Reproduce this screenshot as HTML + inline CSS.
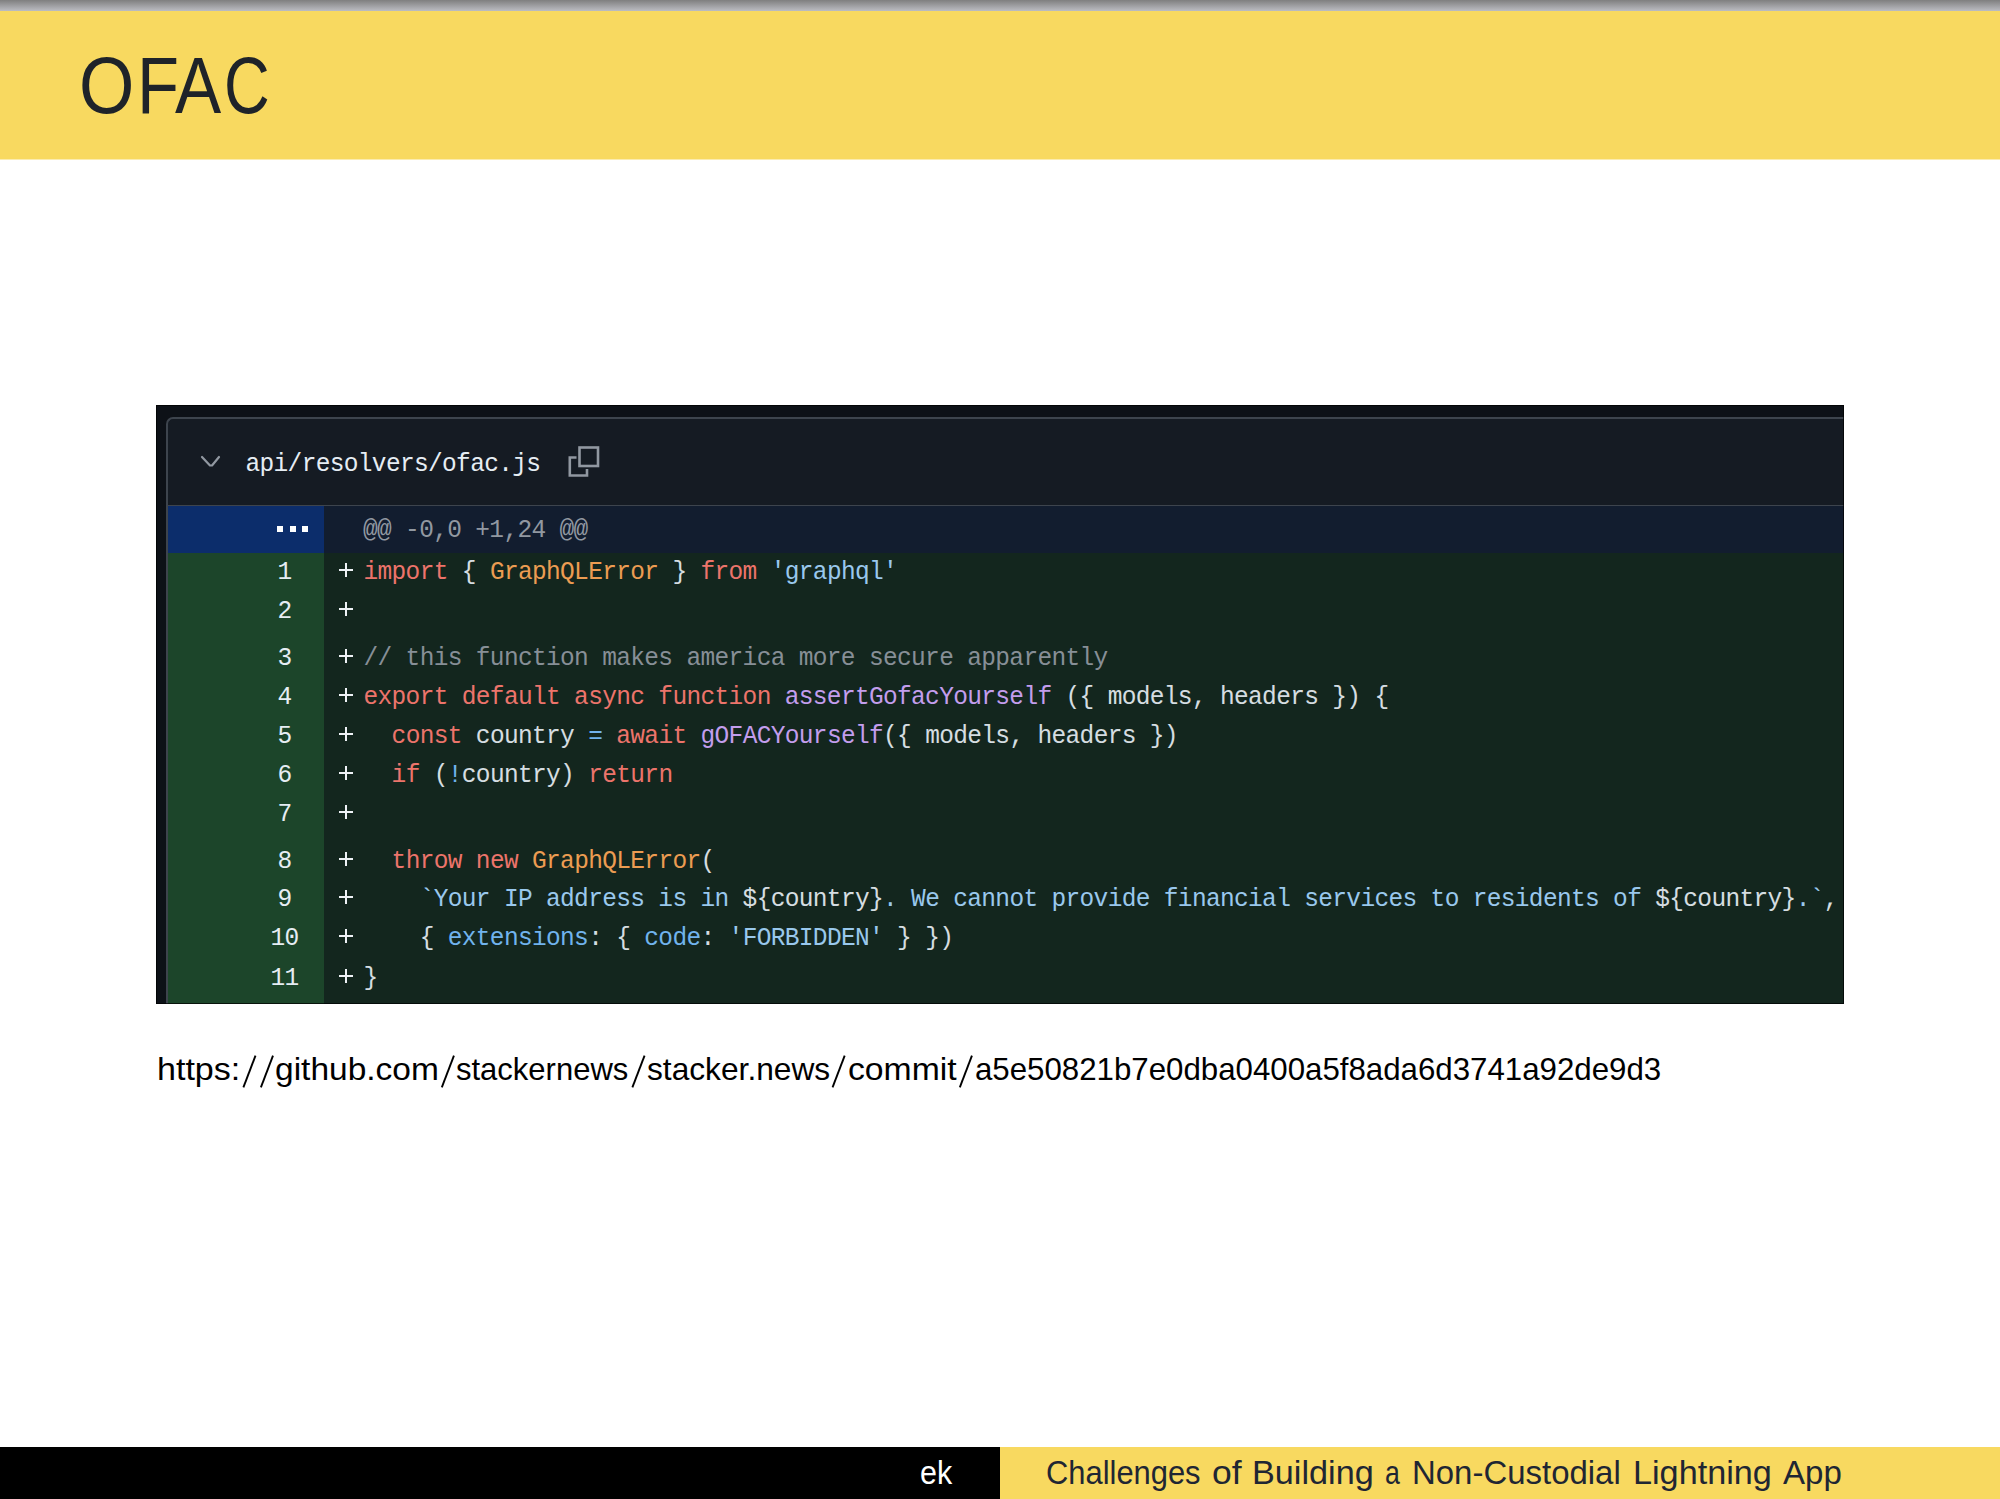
<!DOCTYPE html>
<html><head><meta charset="utf-8">
<style>
html,body{margin:0;padding:0;}
body{width:2000px;height:1499px;position:relative;overflow:hidden;background:#fff;font-family:"Liberation Sans",sans-serif;}
.abs{position:absolute;}
#topgrad{left:0;top:0;width:2000px;height:11px;background:linear-gradient(#7f7f7f,#bbbcc2);}
#hdr{left:0;top:11px;width:2000px;height:148px;background:#f8d960;box-shadow:0 1px 0 #fbecb0;}
.tl{top:45.5px;font-size:79.5px;line-height:1;color:#1f2329;transform-origin:0 0;white-space:nowrap;}
.us{top:1053.2px;font-size:32px;line-height:1;color:#000;transform-origin:0 0;white-space:nowrap;}
#fl{left:0;top:1447px;width:1000px;height:52px;background:#000;}
#fr{left:1000px;top:1447px;width:1000px;height:52px;background:#f8d960;}
.fs{top:1456px;font-size:33.4px;line-height:1;white-space:nowrap;transform-origin:0 0;}

#box{left:156px;top:405px;width:1688px;height:599px;background:#0d1117;overflow:hidden;}
#card{left:10px;top:12px;width:1700px;height:700px;background:#151b23;border-left:2px solid #3d444d;border-top:2px solid #3d444d;border-top-left-radius:7px;}
#hsep{left:168px;top:505px;width:1676px;height:1px;background:#3d444d;}
#hunkg{left:168px;top:506px;width:156px;height:47px;background:#0c2d6b;}
#hunkc{left:324px;top:506px;width:1520px;height:47px;background:#121d2f;}
#addg{left:168px;top:553px;width:156px;height:451px;background:#1c452a;}
#addc{left:324px;top:553px;width:1520px;height:451px;background:#13261e;}
#edge{left:156px;top:405px;width:1688px;height:599px;box-shadow:inset 0 0 0 1px rgba(0,0,0,0.7);}
.mono{font-family:"Liberation Mono",monospace;font-size:24.5px;letter-spacing:-0.662px;white-space:pre;line-height:27px;transform-origin:0 20px;transform:scaleY(1.05);}
.ln{left:254.5px;width:60px;text-align:center;color:#e6edf3;}
.pm{left:339px;width:14px;height:14px;background:linear-gradient(#eef2f6,#eef2f6) center/14px 2px no-repeat,linear-gradient(#eef2f6,#eef2f6) center/2px 14px no-repeat;}
.code{left:363.5px;opacity:0.92;}
#fname{left:245.5px;top:450.5px;color:#e6edf3;}
#hunkt{left:363px;top:516.5px;color:#9198a1;}
.dot{width:6px;height:6px;background:#fff;top:526px;}
</style></head>
<body>
<div id="topgrad" class="abs"></div>
<div id="hdr" class="abs"></div>
<div class="tl abs" style="left:78.7px;transform:scaleX(0.895)">O</div>
<div class="tl abs" style="left:136.7px;transform:scaleX(0.865)">F</div>
<div class="tl abs" style="left:175.3px;transform:scaleX(0.871)">A</div>
<div class="tl abs" style="left:224px;transform:scaleX(0.796)">C</div>

<div id="box" class="abs">
  <div id="card" class="abs"></div>
</div>
<div id="hsep" class="abs"></div>
<div id="hunkg" class="abs"></div>
<div id="hunkc" class="abs"></div>
<div id="addg" class="abs"></div>
<div id="addc" class="abs"></div>
<svg class="abs" style="left:0;top:0" width="2000" height="1499" viewBox="0 0 2000 1499">
  <path d="M202 457 L210 465.5 L212 465.5 L219 457" fill="none" stroke="#9198a1" stroke-width="2.2" stroke-linejoin="round" stroke-linecap="round"/>
  <path d="M587 469 L587 475.5 L569.8 475.5 L569.8 457.5 L576.5 457.5" fill="none" stroke="#9198a1" stroke-width="2.6"/>
  <rect x="579.5" y="447.5" width="18.5" height="18.5" fill="none" stroke="#9198a1" stroke-width="2.6"/>
</svg>
<div id="fname" class="mono abs">api/resolvers/ofac.js</div>
<div class="dot abs" style="left:277px"></div>
<div class="dot abs" style="left:289.5px"></div>
<div class="dot abs" style="left:302px"></div>
<div id="hunkt" class="mono abs">@@ -0,0 +1,24 @@</div>
<div class="ln mono abs" style="top:559px">1</div>
<div class="pm abs" style="top:563px"></div>
<div class="code mono abs" style="top:559px"><span style="color:#ff7b72">import</span><span style="color:#e6edf3"> { </span><span style="color:#ffa657">GraphQLError</span><span style="color:#e6edf3"> } </span><span style="color:#ff7b72">from</span><span style="color:#e6edf3"> </span><span style="color:#a5d6ff">&#x27;graphql&#x27;</span></div>
<div class="ln mono abs" style="top:598px">2</div>
<div class="pm abs" style="top:602px"></div>
<div class="ln mono abs" style="top:645px">3</div>
<div class="pm abs" style="top:649px"></div>
<div class="code mono abs" style="top:645px"><span style="color:#9198a1">// this function makes america more secure apparently</span></div>
<div class="ln mono abs" style="top:684px">4</div>
<div class="pm abs" style="top:688px"></div>
<div class="code mono abs" style="top:684px"><span style="color:#ff7b72">export default async function</span><span style="color:#e6edf3"> </span><span style="color:#d2a8ff">assertGofacYourself</span><span style="color:#e6edf3"> ({ models, headers }) {</span></div>
<div class="ln mono abs" style="top:723px">5</div>
<div class="pm abs" style="top:727px"></div>
<div class="code mono abs" style="top:723px"><span style="color:#e6edf3">  </span><span style="color:#ff7b72">const</span><span style="color:#e6edf3"> country </span><span style="color:#79c0ff">=</span><span style="color:#e6edf3"> </span><span style="color:#ff7b72">await</span><span style="color:#e6edf3"> </span><span style="color:#d2a8ff">gOFACYourself</span><span style="color:#e6edf3">({ models, headers })</span></div>
<div class="ln mono abs" style="top:762px">6</div>
<div class="pm abs" style="top:766px"></div>
<div class="code mono abs" style="top:762px"><span style="color:#e6edf3">  </span><span style="color:#ff7b72">if</span><span style="color:#e6edf3"> (</span><span style="color:#79c0ff">!</span><span style="color:#e6edf3">country) </span><span style="color:#ff7b72">return</span></div>
<div class="ln mono abs" style="top:801px">7</div>
<div class="pm abs" style="top:805px"></div>
<div class="ln mono abs" style="top:847.5px">8</div>
<div class="pm abs" style="top:851.5px"></div>
<div class="code mono abs" style="top:847.5px"><span style="color:#e6edf3">  </span><span style="color:#ff7b72">throw new</span><span style="color:#e6edf3"> </span><span style="color:#ffa657">GraphQLError</span><span style="color:#e6edf3">(</span></div>
<div class="ln mono abs" style="top:886px">9</div>
<div class="pm abs" style="top:890px"></div>
<div class="code mono abs" style="top:886px"><span style="color:#e6edf3">    </span><span style="color:#a5d6ff">`Your IP address is in </span><span style="color:#e6edf3">${country}</span><span style="color:#a5d6ff">. We cannot provide financial services to residents of </span><span style="color:#e6edf3">${country}</span><span style="color:#a5d6ff">.`</span><span style="color:#e6edf3">,</span></div>
<div class="ln mono abs" style="top:925px">10</div>
<div class="pm abs" style="top:929px"></div>
<div class="code mono abs" style="top:925px"><span style="color:#e6edf3">    { </span><span style="color:#79c0ff">extensions</span><span style="color:#e6edf3">: { </span><span style="color:#79c0ff">code</span><span style="color:#e6edf3">: </span><span style="color:#a5d6ff">&#x27;FORBIDDEN&#x27;</span><span style="color:#e6edf3"> } })</span></div>
<div class="ln mono abs" style="top:964.5px">11</div>
<div class="pm abs" style="top:968.5px"></div>
<div class="code mono abs" style="top:964.5px"><span style="color:#e6edf3">}</span></div>
<div id="edge" class="abs"></div>

<div class="us abs" style="left:156.62px;transform:scaleX(1.0642)">https:</div>
<div class="us abs" style="left:275.2px;transform:scaleX(1.0471)">github.com</div>
<div class="us abs" style="left:456.03px;transform:scaleX(0.9688)">stackernews</div>
<div class="us abs" style="left:646.51px;transform:scaleX(0.9904)">stacker.news</div>
<div class="us abs" style="left:847.7px;transform:scaleX(1.0539)">commit</div>
<div class="us abs" style="left:975.27px;transform:scaleX(0.9761)">a5e50821b7e0dba0400a5f8ada6d3741a92de9d3</div>
<svg class="abs" style="left:0;top:0;pointer-events:none" width="2000" height="1499"><g stroke="#000" stroke-width="1.9"><line x1="243.4" y1="1087.4" x2="255.5" y2="1055.6" /><line x1="260.9" y1="1087.4" x2="273" y2="1055.6" /><line x1="441.8" y1="1087.4" x2="453.95" y2="1055.6" /><line x1="632.4" y1="1087.4" x2="644.55" y2="1055.6" /><line x1="832.55" y1="1087.4" x2="844.7" y2="1055.6" /><line x1="959.8" y1="1087.4" x2="971.95" y2="1055.6" /></g></svg>

<div id="fl" class="abs"></div>
<div id="fr" class="abs"></div>
<div class="fs abs" style="left:1046.35px;color:#1f2633;transform:scaleX(0.925)">Challenges</div>
<div class="fs abs" style="left:1212.14px;color:#1f2633;transform:scaleX(1.063)">of</div>
<div class="fs abs" style="left:1252.23px;color:#1f2633;transform:scaleX(1.0246)">Building</div>
<div class="fs abs" style="left:1384.6px;color:#1f2633;transform:scaleX(0.8)">a</div>
<div class="fs abs" style="left:1412.24px;color:#1f2633;transform:scaleX(0.9865)">Non-Custodial</div>
<div class="fs abs" style="left:1632.73px;color:#1f2633;transform:scaleX(1.0244)">Lightning</div>
<div class="fs abs" style="left:1783.4px;color:#1f2633;transform:scaleX(0.9897)">App</div>
<div class="fs abs" style="left:920.09px;color:#fff;transform:scaleX(0.9118)">ek</div>
</body></html>
